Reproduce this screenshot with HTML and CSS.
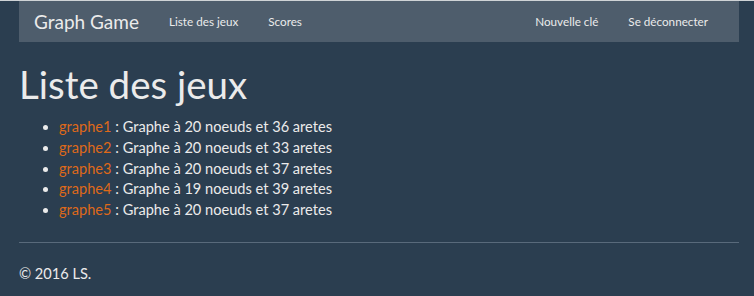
FILE: index.html
```html
<!DOCTYPE html>
<html lang="fr">
<head>
    <meta charset="UTF-8">
    <meta name="viewport" content="width=device-width, initial-scale=1.0">
    <title>Graph Game</title>
    <link rel="stylesheet" href="styles.css">
</head>
<body>
    <section class="container">
        <nav class="navbar">
            <a class="navbar-brand" href="#">Graph Game</a>
            <ul class="navbar-nav">
                <li><a href="#">Liste des jeux</a></li>
                <li><a href="#">Scores</a></li>
            </ul>
            <ul class="navbar-nav navbar-right">
                <li><a href="#">Nouvelle clé</a></li>
                <li><a href="#">Se déconnecter</a></li>
            </ul>
        </nav>

        <h1 class="page-title">Liste des jeux</h1>
        <ul class="game-list">
            <li><a href="#">graphe1</a> : Graphe à 20 noeuds et 36 aretes</li>
            <li><a href="#">graphe2</a> : Graphe à 20 noeuds et 33 aretes</li>
            <li><a href="#">graphe3</a> : Graphe à 20 noeuds et 37 aretes</li>
            <li><a href="#">graphe4</a> : Graphe à 19 noeuds et 39 aretes</li>
            <li><a href="#">graphe5</a> : Graphe à 20 noeuds et 37 aretes</li>
        </ul>

        <hr class="footer-line">
        <footer class="footer">
            <p>&copy; 2016 LS.</p>
        </footer>
    </section>
</body>
</html>
```

FILE: styles.css
```css
body {
    margin: 0;
    border-top: 1px solid #cfd3d6;
    background: #2b3e50;
    color: #ebebeb;
    font-family: Lato, "Open Sans", sans-serif;
    font-size: 14.6px;
    line-height: 20.8px;
}

a {
    color: #df691a;
    text-decoration: none;
}

.container {
    width: 720px;
    margin-left: 19px;
}

.navbar {
    display: flex;
    align-items: center;
    height: 41px;
    background: #4e5d6c;
}

.navbar-brand {
    padding: 0 15px;
    color: #ebebeb;
    font-size: 19px;
    line-height: 41px;
}

.navbar-nav {
    display: flex;
    margin: 0;
    padding: 0;
    list-style: none;
}

.navbar-nav a {
    display: block;
    padding: 0 15px;
    color: #ebebeb;
    font-size: 11.7px;
    line-height: 41px;
}

.navbar-right {
    margin-left: auto;
    margin-right: 16px;
}

.page-title {
    margin: 21px 0 11px;
    font-size: 38.5px;
    font-weight: 400;
    line-height: 43px;
}

.game-list {
    margin: 0;
    padding-left: 40px;
}

.footer-line {
    margin: 21px 0 0;
    border: 0;
    border-top: 1px solid #596a7b;
}

.footer p {
    margin: 21px 0 0;
}
```
